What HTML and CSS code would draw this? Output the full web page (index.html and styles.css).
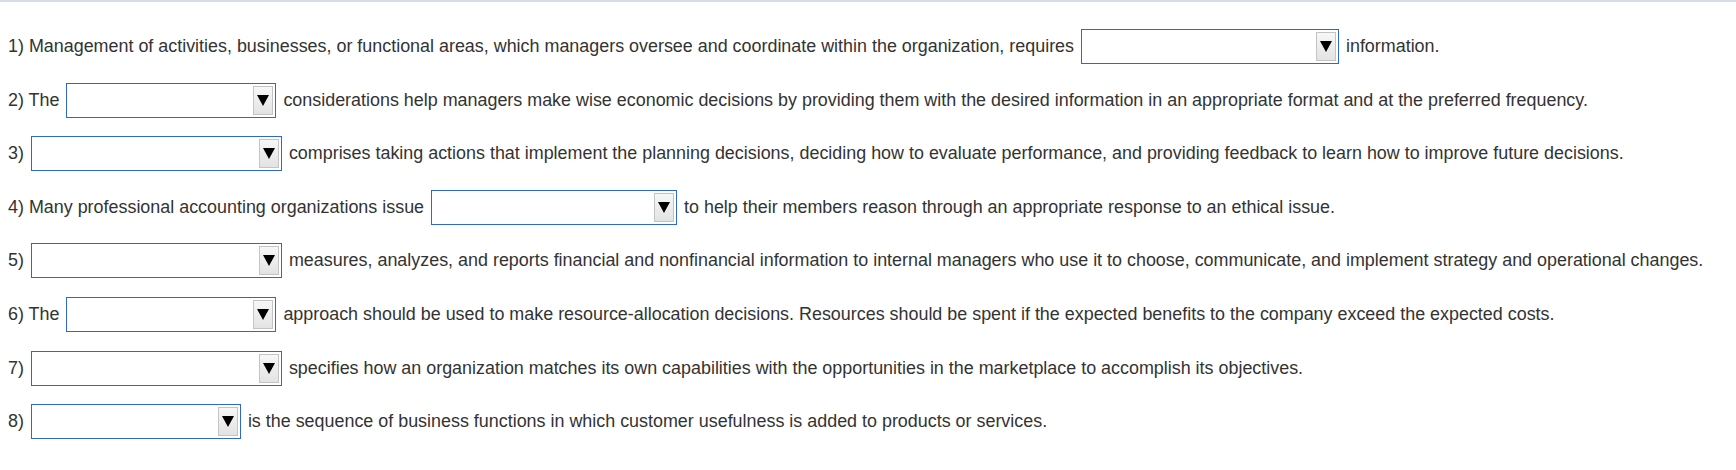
FILE: index.html
```html
<!DOCTYPE html>
<html>
<head>
<meta charset="utf-8">
<link rel="stylesheet" href="styles.css">
</head>
<body>
<div class="topline"></div>
<div class="questions">
  <div class="q">1) Management of activities, businesses, or functional areas, which managers oversee and coordinate within the organization, requires <span class="dd w258"><span class="btn"><span class="tri"></span></span></span> information.</div>
  <div class="q">2) The <span class="dd w210"><span class="btn"><span class="tri"></span></span></span> considerations help managers make wise economic decisions by providing them with the desired information in an appropriate format and at the preferred frequency.</div>
  <div class="q">3) <span class="dd w251"><span class="btn"><span class="tri"></span></span></span> comprises taking actions that implement the planning decisions, deciding how to evaluate performance, and providing feedback to learn how to improve future decisions.</div>
  <div class="q">4) Many professional accounting organizations issue <span class="dd w246"><span class="btn"><span class="tri"></span></span></span> to help their members reason through an appropriate response to an ethical issue.</div>
  <div class="q">5) <span class="dd w251"><span class="btn"><span class="tri"></span></span></span> measures, analyzes, and reports financial and nonfinancial information to internal managers who use it to choose, communicate, and implement strategy and operational changes.</div>
  <div class="q">6) The <span class="dd w210"><span class="btn"><span class="tri"></span></span></span> approach should be used to make resource-allocation decisions. Resources should be spent if the expected benefits to the company exceed the expected costs.</div>
  <div class="q">7) <span class="dd w251"><span class="btn"><span class="tri"></span></span></span> specifies how an organization matches its own capabilities with the opportunities in the marketplace to accomplish its objectives.</div>
  <div class="q">8) <span class="dd w210"><span class="btn"><span class="tri"></span></span></span> is the sequence of business functions in which customer usefulness is added to products or services.</div>
</div>
</body>
</html>
```
FILE: styles.css
```css
html, body {
  margin: 0;
  padding: 0;
  background: #ffffff;
}
body {
  font-family: "Liberation Sans", Arial, sans-serif;
  font-size: 17.92px;
  color: #333333;
}
.topline {
  height: 2px;
  background: #d5dce6;
}
.questions {
  display: flex;
  flex-direction: column;
  gap: 18.6px;
  padding: 27px 8px 0 8px;
}
.q {
  line-height: 35px;
  height: 35px;
  white-space: nowrap;
}
.dd {
  display: inline-flex;
  box-sizing: border-box;
  height: 35px;
  border: 1px solid #2f66d2;
  background: #fff;
  vertical-align: top;
  justify-content: flex-end;
  align-items: center;
  padding-right: 2px;
  margin: 0 2px 0 2px;
}
.w258 { width: 258px; }
.w251 { width: 251px; }
.w246 { width: 246px; }
.w210 { width: 210px; }
.btn {
  box-sizing: border-box;
  width: 20px;
  height: 29px;
  border: 1px solid #c4c4c4;
  background: linear-gradient(#f7f7f7, #e3e3e3);
  display: flex;
  align-items: center;
  justify-content: center;
}
.tri {
  width: 0;
  height: 0;
  border-left: 6px solid transparent;
  border-right: 6px solid transparent;
  border-top: 11px solid #000;
}
```
